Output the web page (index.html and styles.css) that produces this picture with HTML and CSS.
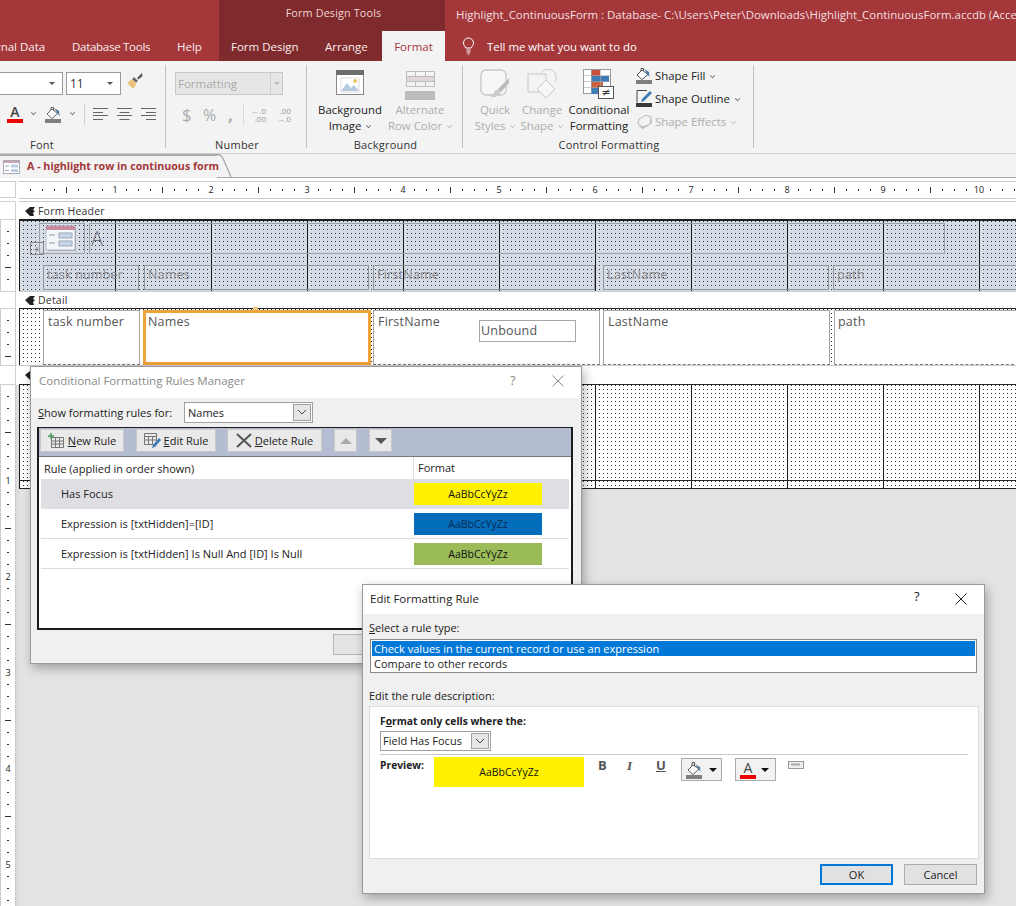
FILE: index.html
```html
<!DOCTYPE html>
<html lang="en">
<head>
<meta charset="utf-8">
<title>Highlight_ContinuousForm</title>
<link rel="stylesheet" href="styles.css">
</head>
<body>
<div class="app">
  <header class="titlebar">
    <div class="title-left"></div>
    <div class="context-title">Form Design Tools</div>
    <div class="doc-title">Highlight_ContinuousForm : Database- C:\Users\Peter\Downloads\Highlight_ContinuousForm.accdb (Access 2007 - 2016 file format) - Access</div>
  </header>
  <nav class="tabs">
    <div class="tabs-main">
      <span class="tab t-ext">External Data</span>
      <span class="tab t-db">Database Tools</span>
      <span class="tab t-help">Help</span>
    </div>
    <div class="tabs-context">
      <span class="tab t-fd">Form Design</span>
      <span class="tab t-arr">Arrange</span>
      <span class="tab t-fmt">Format</span>
    </div>
    <div class="tell">
      <svg class="bulb" width="13" height="18" viewBox="0 0 13 18"><path d="M6.500 1a5 5 0 0 0-5 5c0 2.200 1.500 3.200 2.200 5h5.600c.7-1.800 2.200-2.800 2.200-5a5 5 0 0 0-5-5z" fill="none" stroke="#fff"/><path d="M4.500 13h4M4.500 15h4M5.500 17h2" stroke="#fff"/></svg>
      <span>Tell me what you want to do</span>
    </div>
  </nav>

  <section class="ribbon">
    <div class="group g-font">
      <div class="group-body font-body">
        <div class="font-row1">
          <div class="combo c-name"><span class="arrow-s"></span></div>
          <div class="combo c-size"><span>11</span><span class="arrow-s"></span></div>
          <svg width="17" height="17" viewBox="0 0 17 17"><path d="M16 0l-5 5 1.500 1.500L16.500 3z" fill="#555"/><path d="M8 4l4 4-2 1.500-4-3z" fill="#666"/><path d="M6 6l4.500 4.500L7.500 16 1 10z" fill="#e8c17c"/></svg>
        </div>
        <div class="font-row2">
          <span class="color-a">A</span><span class="chev"></span>
          <svg class="fill-ic" width="18" height="17" viewBox="0 0 18 17"><path d="M7 3L2 8l5 4.500L12.500 7.500z" fill="#fff" stroke="#666"/><path d="M6 4V1.500h2.500V5" fill="none" stroke="#666"/><path d="M9 2l5 3 .5 5.500-2-3.500z" fill="#3f6f9f"/><rect x="0" y="13" width="16" height="4" fill="#7f7f7f"/></svg><span class="chev c2"></span>
          <span class="vsep"></span>
          <svg width="15" height="12" viewBox="0 0 15 12"><path d="M0 .5h15M0 4.500h10M0 7.500h15M0 11.500h10" stroke="#666"/></svg>
          <svg width="15" height="12" viewBox="0 0 15 12"><path d="M0 .5h15M2.500 4.500h10M0 7.500h15M2.500 11.500h10" stroke="#666"/></svg>
          <svg width="15" height="12" viewBox="0 0 15 12"><path d="M0 .5h15M5 4.500h10M0 7.500h15M5 11.500h10" stroke="#666"/></svg>
        </div>
      </div>
      <div class="group-label">Font</div>
    </div>

    <div class="group g-number">
      <div class="group-body num-body">
        <div class="combo c-fmt"><span>Formatting</span><span class="c-fmt-btn"></span></div>
        <div class="num-row">
          <span class="n-sym n-d">$</span><span class="n-sym n-p">%</span><span class="n-sym n-c">,</span>
          <span class="vsep v-light"></span>
          <span class="n-dec"><i>←.0</i><i>.00</i></span>
          <span class="n-dec"><i>.00</i><i>→.0</i></span>
        </div>
      </div>
      <div class="group-label">Number</div>
    </div>

    <div class="group g-bg">
      <div class="group-body bg-body">
        <div class="big b-img">
          <svg class="big-ic" width="28" height="25" viewBox="0 0 28 25"><rect x=".5" y=".5" width="27" height="24" fill="#fff" stroke="#888"/><rect width="28" height="5" fill="#6d6d6d"/><path d="M5 21l6-8 4 5 3-3 5 6z" fill="#b6cbe0"/><rect x="5" y="8" width="18" height="14" fill="none" stroke="#dcdcdc"/><circle cx="19" cy="11" r="2" fill="#e9c46a"/></svg>
          <span>Background</span><span>Image <i class="chev-in"></i></span>
        </div>
        <div class="big b-alt off">
          <svg class="big-ic" width="30" height="29" viewBox="0 0 30 29"><path d="M1.500.5h28v15h-28zM1.500 5.500h28M1.500 10.500h28M10.500.5v15M20.500.5v15" fill="none" stroke="#bdbdbd"/><rect x="2" y="6" width="27" height="4" fill="#dfd7db"/><rect y="20" width="32" height="9" fill="#bdbdbd"/></svg>
          <span>Alternate</span><span>Row Color <i class="chev-in"></i></span>
        </div>
      </div>
      <div class="group-label">Background</div>
    </div>

    <div class="group g-ctrl">
      <div class="group-body ctrl-body">
        <div class="big b-quick off">
          <svg class="big-ic" width="30" height="30" viewBox="0 0 30 30"><rect x="1" y="1" width="25" height="25" rx="5" fill="#f7f7f7" stroke="#c8c8c8" stroke-width="1.300"/><path d="M29 9L18 20l3 3 8-9z" fill="#bbb"/><path d="M18 20l-3 2-4 6c4 1 8-1 10-5z" fill="#ccc"/></svg>
          <span>Quick</span><span>Styles <i class="chev-in"></i></span>
        </div>
        <div class="big b-change off">
          <svg class="big-ic" width="30" height="30" viewBox="0 0 30 30"><rect x="1" y="5" width="18" height="18" fill="none" stroke="#c8c8c8"/><path d="M14 4a8 8 0 1 1 14 9" fill="none" stroke="#c8c8c8"/><path d="M19 11l9 9-9 9-9-9z" fill="#f7f7f7" stroke="#c8c8c8"/></svg>
          <span>Change</span><span>Shape <i class="chev-in"></i></span>
        </div>
        <div class="big b-cond">
          <svg class="big-ic" width="32" height="30" viewBox="0 0 32 30"><rect x=".5" y=".5" width="27" height="24" fill="#fff" stroke="#999"/><rect x="8" y="1" width="9" height="6" fill="#c9503f"/><rect x="8" y="7" width="18" height="6" fill="#3f7cb6"/><rect x="8" y="13" width="12" height="6" fill="#c9603f"/><rect x="8" y="19" width="7" height="6" fill="#3f7cb6"/><path d="M8.500 1v24M17.500 1v24M1 6.500h26M1 12.500h26M1 18.500h26" stroke="#aaa" fill="none" stroke-opacity=".6"/><rect x="15.500" y="17.500" width="15" height="12" fill="#fff" stroke="#555"/><text x="23" y="27" class="neq">≠</text></svg>
          <span>Conditional</span><span>Formatting</span>
        </div>
        <div class="shape-list">
          <div class="shape-item"><svg width="17" height="17" viewBox="0 0 17 17"><path d="M6 3L1 8l5 4.500 6-5z" fill="#fff" stroke="#555"/><path d="M5 4V1.500h2.500V4" fill="none" stroke="#555"/><path d="M8 2l5 3 .5 5-2-3z" fill="#3f6f9f"/><rect y="13" width="16" height="4" fill="#7f7f7f"/></svg><span>Shape Fill <i class="chev-in"></i></span></div>
          <div class="shape-item"><svg width="17" height="17" viewBox="0 0 17 17"><path d="M1 .5h10M1 .5v12" stroke="#444" fill="none"/><path d="M14 1l2 2-8 8-3 1 1-3z" fill="#3f7cb6"/><rect y="13" width="16" height="4" fill="#3a3a3a"/></svg><span>Shape Outline <i class="chev-in"></i></span></div>
          <div class="shape-item off"><svg width="17" height="17" viewBox="0 0 17 17"><path d="M3 6l7-4 5 2-1 7-7 3-5-3z" fill="#f2f2f2" stroke="#bbb"/><path d="M15 4l1 6-9 6-5-3 5 1 7-3z" fill="#bbb"/></svg><span>Shape Effects <i class="chev-in"></i></span></div>
        </div>
      </div>
      <div class="group-label">Control Formatting</div>
    </div>
  </section>

  <div class="doc-strip">
    <div class="doc-tab">
      <svg width="17" height="14" viewBox="0 0 17 14"><rect x=".5" y=".5" width="16" height="13" fill="#fff" stroke="#aab"/><rect x="1" y="1" width="15" height="2" fill="#c9a3ad"/><rect x="8" y="4.500" width="7" height="3" fill="#bcd0e2"/><rect x="8" y="9" width="7" height="3" fill="#bcd0e2"/><path d="M2 6h4M2 10.500h4" stroke="#8aa"/></svg>
      <span>A - highlight row in continuous form</span>
    </div>
    <svg class="tab-curve" width="16" height="24" viewBox="0 0 16 24"><path d="M0 .5C5 .5 6 4 8 9l6 14" fill="none" stroke="#a9a9a9" stroke-width="1.300"/></svg>
  </div>

  <div class="ruler-row">
    <div class="corner"></div>
    <div class="hruler">
      <div class="inch"><b>1</b></div><div class="inch"><b>2</b></div><div class="inch"><b>3</b></div><div class="inch"><b>4</b></div><div class="inch"><b>5</b></div><div class="inch"><b>6</b></div><div class="inch"><b>7</b></div><div class="inch"><b>8</b></div><div class="inch"><b>9</b></div><div class="inch"><b>10</b></div>
    </div>
  </div>

  <div class="design">
    <div class="row bar-row"><div class="vbox"></div><div class="bar"><svg class="bar-ic" width="10" height="9" viewBox="0 0 10 9"><path d="M0 4l5-4h5L8 3l2 1-2 2 1 3H5z" fill="#222"/></svg>Form Header</div></div>
    <div class="row r-head">
      <div class="vruler"></div>
      <div class="canvas canvas-head">
        <div class="ctl logo-box">
          <svg width="31" height="26" viewBox="0 0 31 26"><rect x="3" y="3" width="28" height="23" fill="#999"/><rect x="1" y="1" width="29" height="24" fill="#f4f6f9" stroke="#b4bcc8"/><rect x="1" y="1" width="29" height="4" fill="#c78a9e"/><rect x="14" y="8" width="13" height="5" fill="#c7d6e6" stroke="#98a9bd"/><rect x="14" y="16" width="13" height="5" fill="#c7d6e6" stroke="#98a9bd"/><path d="M4 10h6M4 18h6" stroke="#8a97a8"/></svg>
        </div>
        <div class="ctl title-box">A</div>
        <div class="ctl mover">+</div>
        <div class="ctl hlabel l1">task number</div>
        <div class="ctl hlabel l2">Names</div>
        <div class="ctl hlabel l3">FirstName</div>
        <div class="ctl hlabel l4">LastName</div>
        <div class="ctl hlabel l5">path</div>
      </div>
    </div>
    <div class="row bar-row bar-d"><div class="vbox"></div><div class="bar"><svg class="bar-ic" width="10" height="9" viewBox="0 0 10 9"><path d="M0 4l5-4h5L8 3l2 1-2 2 1 3H5z" fill="#222"/></svg>Detail</div></div>
    <div class="row r-detail">
      <div class="vruler"></div>
      <div class="canvas canvas-detail">
        <div class="ctl field f1">task number</div>
        <div class="ctl field f2">Names</div>
        <div class="ctl field f3">FirstName</div>
        <div class="ctl field f4">LastName</div>
        <div class="ctl field f5">path</div>
        <div class="ctl unbound">Unbound</div>
        <span class="ctl handle"></span>
      </div>
    </div>
    <div class="row bar-row bar-f"><div class="vbox"></div><div class="bar"><svg class="bar-ic" width="10" height="9" viewBox="0 0 10 9"><path d="M0 4l5-4h5L8 3l2 1-2 2 1 3H5z" fill="#222"/></svg>Form Footer</div></div>
    <div class="row r-foot">
      <div class="vruler long">
        <div class="vinch"><b>1</b></div><div class="vinch"><b>2</b></div><div class="vinch"><b>3</b></div><div class="vinch"><b>4</b></div><div class="vinch"><b>5</b></div>
      </div>
      <div class="foot-wrap">
        <div class="canvas canvas-foot"></div>
        <div class="canvas canvas-foot2"></div>
        <div class="empty"></div>
      </div>
    </div>
  </div>

  <div class="dialog d-manager">
    <div class="dlg-title dim"><span>Conditional Formatting Rules Manager</span><span class="q">?</span><svg class="x" width="12" height="12" viewBox="0 0 12 12"><path d="M.5.5l11 11M11.500.5l-11 11" stroke="#8a8a8a"/></svg></div>
    <div class="m-show">
      <span><u>S</u>how formatting rules for:</span>
      <div class="dcombo m-combo"><span>Names</span><span class="dbtn"><svg width="10" height="6" viewBox="0 0 10 6"><path d="M1 1l4 4 4-4" fill="none" stroke="#444"/></svg></span></div>
    </div>
    <div class="m-panel">
      <div class="m-tools">
        <div class="tbtn b-new"><svg width="17" height="16" viewBox="0 0 17 16"><path d="M3.500 4.500h12v10h-12zM3.500 8h12M3.500 11h12M7.500 4.500v10M11.500 4.500v10" fill="none" stroke="#777"/><path d="M3 0v6M0 3h6" stroke="#4e9a5b" stroke-width="1.500"/></svg><span><u>N</u>ew Rule</span></div>
        <div class="tbtn b-edit"><svg width="17" height="16" viewBox="0 0 17 16"><path d="M.5.5h12v11H.5zM.5 3.500h12M.5 7h12M4.500 3.500v8M8.500 3.500v8" fill="none" stroke="#777"/><path d="M15 5l2 2-6 7-3 1 1-3z" fill="#3f7cb6"/></svg><span><u>E</u>dit Rule</span></div>
        <div class="tbtn b-del"><svg width="16" height="15" viewBox="0 0 16 15"><path d="M1 1l14 13M15 1L1 14" stroke="#555" stroke-width="2"/></svg><span><u>D</u>elete Rule</span></div>
        <div class="tbtn b-up"><span class="tri up"></span></div>
        <div class="tbtn b-down"><span class="tri down"></span></div>
      </div>
      <div class="m-head"><span class="m-col1">Rule (applied in order shown)</span><span class="m-col2">Format</span></div>
      <div class="m-rule sel"><span>Has Focus</span><div class="swatch yellow">AaBbCcYyZz</div></div>
      <div class="m-rule"><span>Expression is [txtHidden]=[ID]</span><div class="swatch blue">AaBbCcYyZz</div></div>
      <div class="m-rule"><span>Expression is [txtHidden] Is Null And [ID] Is Null</span><div class="swatch green">AaBbCcYyZz</div></div>
    </div>
    <div class="m-foot"><div class="mbtn"></div></div>
  </div>

  <div class="dialog d-edit">
    <div class="dlg-title"><span>Edit Formatting Rule</span><span class="q">?</span><svg class="x" width="12" height="12" viewBox="0 0 12 12"><path d="M.5.5l11 11M11.500.5l-11 11" stroke="#222"/></svg></div>
    <div class="e-body">
      <div class="e-label"><u>S</u>elect a rule type:</div>
      <div class="e-list">
        <div class="e-opt on">Check values in the current record or use an expression</div>
        <div class="e-opt">Compare to other records</div>
      </div>
      <div class="e-label e-l2">Edit the rule description:</div>
      <div class="e-panel">
        <div class="e-strong">F<u>o</u>rmat only cells where the:</div>
        <div class="dcombo e-combo"><span>Field Has Focus</span><span class="dbtn"><svg width="10" height="6" viewBox="0 0 10 6"><path d="M1 1l4 4 4-4" fill="none" stroke="#444"/></svg></span></div>
        <div class="e-line"></div>
        <div class="e-preview">
          <span class="e-strong e-pv">Preview:</span>
          <div class="swatch yellow e-sw">AaBbCcYyZz</div>
          <div class="e-tools">
            <span class="fx fb">B</span><span class="fx fi">I</span><span class="fx fu">U</span>
            <div class="pick p1"><svg width="18" height="18" viewBox="0 0 18 18"><path d="M7 4L2 9l5 4.500L13 8z" fill="#fff" stroke="#555"/><path d="M6 5V1.500h2.500V5" fill="none" stroke="#555"/><path d="M9 3l5 3 .5 5-2-3z" fill="#4d7ea8"/><rect y="14" width="16" height="4" fill="#7f7f7f"/></svg><span class="tri down black"></span></div>
            <div class="pick p2"><span class="pick-a">A</span><span class="tri down black"></span></div>
            <svg class="caption-ic" width="16" height="8" viewBox="0 0 16 8"><rect x=".5" y=".5" width="15" height="7" fill="#eee" stroke="#999"/><path d="M3 3.500h9" stroke="#aaa" stroke-width="2"/></svg>
          </div>
        </div>
      </div>
      <div class="e-foot">
        <div class="dbutton ok">OK</div>
        <div class="dbutton">Cancel</div>
      </div>
    </div>
  </div>
</div>
</body>
</html>
```
FILE: styles.css
```css
* { box-sizing: border-box; }
html, body { margin: 0; padding: 0; }
body { font-family: "Open Sans", "Noto Sans", "Liberation Sans", sans-serif; background: #e3e3e3; }
i { font-style: normal; }
.app { position: relative; width: 1016px; height: 906px; overflow: hidden; background: #fff; display: flex; flex-direction: column; }

/* title bar */
.titlebar { height: 31px; background: #a4373a; display: flex; flex: none; color: #f5dfe0; font-size: 12px; }
.title-left { width: 219px; flex: none; }
.context-title { width: 226px; flex: none; background: #7f2a2c; text-align: center; padding: 5px 0 0 3px; font-size: 10.8px; letter-spacing: .15px; color: #f0d5d6; }
.doc-title { padding: 7px 0 0 11px; white-space: nowrap; font-size: 11.45px; overflow: hidden; }
.tabs { height: 30px; background: #a4373a; display: flex; flex: none; color: #fff; font-size: 11.5px; }
.tabs-main { width: 219px; flex: none; display: flex; overflow: hidden; position: relative; }
.tabs-context { width: 226px; flex: none; display: flex; background: #7f2a2c; }
.tab { display: block; line-height: 31px; white-space: nowrap; color: #fbeeee; }
.t-ext { flex: none; margin-left: -27px; width: 99px; }
.t-db { flex: none; width: 105px; letter-spacing: -.28px; }
.t-help { flex: none; }
.t-fd { margin-left: 12px; width: 94px; }
.t-arr { width: 57px; }
.t-fmt { width: 63px; background: #f3f3f3; color: #a4373a; text-align: center; }
.tell { display: flex; align-items: center; margin-left: 17px; color: #fff; font-size: 11.4px; }
.tell span { margin-left: 12px; }

/* ribbon */
.ribbon { height: 93px; flex: none; background: #f3f3f3; border-bottom: 1px solid #d0d0d0; display: flex; font-size: 11.4px; color: #222; }
.group { flex: none; display: flex; flex-direction: column; padding-top: 4px; border-right: 1px solid transparent; position: relative; }
.group::after { content: ""; position: absolute; right: 0; top: 4px; height: 83px; width: 1px; background: #c2c2c2; }
.group-body { height: 72px; flex: none; }
.group-label { text-align: center; font-size: 11px; line-height: 16px; color: #333; letter-spacing: .2px; }
.g-font { width: 167px; }
.g-font .group-label { padding-right: 82px; }
.g-number { width: 141px; }
.g-bg { width: 156px; }
.g-ctrl { width: 291px; }
.font-body { overflow: hidden; }
.font-row1 { display: flex; align-items: center; margin-top: 7px; margin-left: -20px; }
.combo { height: 23px; background: #fff; border: 1px solid #9a9a9a; display: flex; align-items: center; position: relative; font-size: 12px; }
.c-name { width: 83px; }
.c-size { width: 55px; margin-left: 3px; padding-left: 3px; color: #333; }
.font-row1 svg { margin-left: 5px; margin-top: -4px; }
.arrow-s { position: absolute; right: 7px; top: 9px; border: 3px solid transparent; border-top-color: #555; }
.font-row2 { display: flex; align-items: center; margin-top: 9px; margin-left: 7px; height: 20px; }
.color-a { width: 16px; text-align: center; font-size: 14px; line-height: 14px; height: 18px; color: #444; border-bottom: 4px solid #e00; font-weight: 600; }
.chev, .chev-in { display: inline-block; width: 5px; height: 5px; border-right: 1px solid #666; border-bottom: 1px solid #666; transform: rotate(45deg) scale(.75); }
.chev { margin: -3px 0 0 8px; }
.chev-in { margin: 0 0 2px 2px; }
.fill-ic { margin-left: 9px; }
.chev.c2 { margin-left: 7px; }
.vsep { width: 1px; height: 21px; background: #cfcfcf; margin: 0 8px 0 9px; }
.font-row2 svg + svg { margin-left: 9px; }
.font-row2 .vsep + svg { margin-left: 0; }
.num-body { padding-left: 8px; }
.c-fmt { width: 108px; background: #e6e6e6; border-color: #c8c8c8; color: #aaa; margin-top: 7px; padding-left: 2px; font-size: 11.5px; }
.c-fmt-btn { position: absolute; right: 0; top: 0; bottom: 0; width: 12px; border-left: 1px solid #d0d0d0; }
.c-fmt-btn::after { content: ""; position: absolute; left: 3px; top: 9px; border: 3px solid transparent; border-top-color: #bbb; }
.num-row { display: flex; align-items: center; margin-top: 9px; height: 21px; color: #aaa; }
.n-sym { font-size: 17px; line-height: 20px; }
.n-d { margin-left: 7px; width: 21px; }
.n-p { width: 25px; font-size: 16px; }
.n-c { width: 15px; font-weight: 700; }
.n-dec { display: flex; flex-direction: column; font-size: 8px; line-height: 8px; text-align: right; width: 15px; color: #999; white-space: nowrap; }
.num-row .vsep { margin: 0 7px 0 0; background: #d8d8d8; }
.n-dec + .n-dec { margin-left: 10px; }
.bg-body { display: flex; }
.big { display: flex; flex-direction: column; align-items: center; font-size: 11.4px; line-height: 16px; white-space: nowrap; }
.big-ic { margin-bottom: 9px; flex: none; }
.off { color: #adadad; }
.off .chev-in { border-color: #bbb; }
.b-img { width: 70px; margin-left: 7px; padding-top: 5px; }
.b-img .big-ic { margin-bottom: 7px; }
.b-alt { width: 70px; padding-top: 6px; }
.b-alt .big-ic { margin-bottom: 2px; }
.ctrl-body { display: flex; }
.b-quick { width: 48px; margin-left: 7px; padding-top: 4px; }
.b-quick .big-ic, .b-change .big-ic { margin-bottom: 3px; }
.b-change { width: 46px; padding-top: 4px; }
.b-cond { width: 68px; padding-top: 4px; }
.b-cond .big-ic { margin-bottom: 3px; }
.neq { font-size: 11px; text-anchor: middle; fill: #333; font-family: "DejaVu Sans", sans-serif; }
.shape-list { margin-left: 3px; margin-top: -1px; display: flex; flex-direction: column; }
.shape-item { display: flex; align-items: center; height: 23px; white-space: nowrap; }
.shape-item span { margin-left: 2px; }

/* doc tab strip */
.doc-strip { height: 24px; flex: none; background: #f3f3f3; display: flex; border-bottom: 1px solid #aaa; position: relative; }
.doc-tab { width: 217px; height: 24px; flex: none; border-top: 2px solid #a9a9a9; background: #f3f3f3; display: flex; align-items: center; padding: 0 0 2px 3px; }
.doc-tab svg { margin-top: 2px; flex: none; }
.doc-tab span { flex: none; margin-left: 7px; color: #a4373a; font-weight: 700; font-size: 10.7px; white-space: nowrap; }
.tab-curve { flex: none; position: relative; }

/* ruler */
.ruler-row { height: 24px; flex: none; display: flex; padding: 3px 0; background: #fff; }
.corner { width: 16px; height: 17px; margin-right: 3px; border: 1px solid #cfcfcf; border-left: 0; flex: none; }
.hruler { flex: 1; display: flex; height: 18px; border-top: 1px solid #ccc; border-bottom: 1px solid #ccc; align-items: center;
  background-image: repeating-linear-gradient(90deg, transparent 0 11px, #333 11px 12px), repeating-linear-gradient(90deg, transparent 0 47px, #333 47px 48px);
  background-size: 100% 2px, 100% 6px; background-repeat: no-repeat; background-position: 0 center, 0 center; }
.inch { width: 96px; flex: none; display: flex; justify-content: flex-end; font-size: 9px; color: #222; line-height: 12px; }
.inch b { font-weight: 400; background: #fff; transform: translateX(50%); padding: 0 1px; }

/* design surface */
.design { flex: 1; display: flex; flex-direction: column; min-height: 0; margin-top: -1px; }
.row { display: flex; flex: none; }
.bar-row { height: 19px; }
.vbox { width: 16px; height: 100%; margin-right: 3px; flex: none; border: 1px solid #d0d0d0; border-left: 0; }
.bar { flex: 1; height: 100%; background: #fff; border-top: 1px solid #ccc; border-bottom: 1px solid #222; font-size: 10.5px; color: #333; display: flex; align-items: center; padding: 1px 0 0 6px; letter-spacing: .2px; }
.bar-ic { margin-right: 3px; }
.r-head { height: 71px; }
.vruler { width: 16px; margin-right: 3px; flex: none; border-right: 1px solid #ccc; border-left: 1px solid #ccc;
  background-image: repeating-linear-gradient(180deg, transparent 0 11px, #333 11px 12px), repeating-linear-gradient(180deg, transparent 0 47px, #333 47px 48px);
  background-size: 2px 100%, 6px 100%; background-repeat: no-repeat; background-position: 6px 0, 4px 0; }
.canvas { flex: 1; position: relative;
  background-image: linear-gradient(90deg, transparent 95px, #1a1a1a 95px), conic-gradient(from 270deg at 1px 1px, #333 90deg, transparent 0);
  background-size: 96px 100%, 4px 4px; background-position: 1px 0, 0 0; }
.canvas-head { background-color: #d6dce6; border-top: 1px solid #222; }
.bar-d { height: 18px; }
.bar-d .bar { padding-top: 0; }
.r-detail { height: 56px; }
.canvas-detail { background-color: #fff; }
.bar-f { height: 20px; }
.r-foot { flex: 1; min-height: 0; background: #dcdcdc; }
.foot-wrap { flex: 1; display: flex; flex-direction: column; }
.canvas-foot { flex: none; height: 96px; background-color: #fff; border-bottom: 1px solid #222; }
.canvas-foot2 { flex: none; height: 8px; background-color: #fff; border-bottom: 1px solid #222; }
.empty { flex: 1; background: #e3e3e3; }
.vruler.long { display: flex; flex-direction: column; overflow: hidden; background-color: #fff; }
.vinch { height: 96px; flex: none; display: flex; justify-content: center; align-items: flex-end; font-size: 9px; line-height: 12px; color: #222; }
.vinch b { font-weight: 400; background: #fff; transform: translateY(50%); }

/* controls on the form canvas */
.ctl { position: absolute; }
.logo-box { left: 20px; top: 2px; width: 46px; height: 31px; border: 1px solid #9aa0aa; padding: 1px 0 0 5px; display: flex; }
.title-box { left: 70px; top: 2px; width: 856px; height: 31px; border: 1px solid #9aa0aa; font-size: 20px; font-weight: 300; line-height: 29px; color: #6a6f78; padding-left: 1px; }
.mover { left: 11px; top: 21px; width: 14px; height: 13px; border: 1px solid #8a8a8a; font-size: 11px; line-height: 11px; text-align: center; color: #666; }
.hlabel { top: 44px; height: 25px; border: 1px solid #8f949c; font-size: 12.5px; line-height: 18px; color: #85898f; padding-left: 3px; white-space: nowrap; letter-spacing: .2px; }
.l1 { left: 24px; width: 96px; }
.l2 { left: 125px; width: 225px; }
.l3 { left: 354px; width: 222px; }
.l4 { left: 584px; width: 226px; }
.l5 { left: 814px; width: 185px; border-right: 0; }
.field { top: 1px; height: 55px; background: #fff; border: 1px solid #a6a6a6; border-bottom: 1px dashed #777; font-size: 12.5px; line-height: 21px; color: #555; padding-left: 4px; letter-spacing: .2px; }
.f1 { left: 24px; width: 97px; }
.f2 { left: 124px; width: 228px; border: 3px solid #f0a43a; padding-left: 2px; line-height: 17px; }
.f3 { left: 354px; width: 227px; }
.f4 { left: 584px; width: 227px; }
.f5 { left: 815px; width: 190px; border-right: 0; padding-left: 3px; }
.unbound { left: 460px; top: 11px; width: 97px; height: 22px; background: #fff; border: 1px solid #a6a6a6; font-size: 12.5px; line-height: 20px; color: #555; padding-left: 1px; letter-spacing: .2px; }
.handle { left: 234px; top: -2px; width: 5px; height: 3px; background: #f2c27c; }

/* dialogs */
.dialog { position: absolute; background: #f0f0f0; border: 1px solid #9a9a9a; box-shadow: 2px 4px 10px rgba(0,0,0,.3); color: #222; font-size: 11px; display: flex; flex-direction: column; }
.dlg-title { height: 29px; flex: none; background: #fff; display: flex; align-items: center; padding: 0 0 2px 7px; font-size: 11.5px; position: relative; }
.dlg-title.dim { color: #8a8a8a; height: 31px; padding: 0 0 4px 8px; }
.q { position: absolute; font-size: 13px; }
.x { position: absolute; }
.d-manager { left: 30px; top: 366px; width: 552px; height: 298px; }
.d-manager .q { left: 479px; top: 4px; }
.d-manager .x { left: 521px; top: 8px; }
.m-show { display: flex; align-items: center; padding: 3px 0 0 7px; height: 25px; }
.m-show > span { width: 146px; }
.dcombo { background: #fff; border: 1px solid #a0a0a0; display: flex; align-items: center; padding-left: 3px; position: relative; }
.m-combo { width: 129px; height: 21px; }
.dbtn { position: absolute; right: 0; top: 0; width: 18px; bottom: 0; background: #e6e6e6; border: 1px solid #a0a0a0; margin: 1px; display: flex; align-items: center; justify-content: center; }
.m-panel { margin: 4px 0 0 6px; width: 536px; height: 203px; border: 2px solid #1c1c1c; border-top-width: 1px; background: #fff; display: flex; flex-direction: column; padding: 0 2px 0 0; }
.m-tools { height: 29px; flex: none; background: #b3bcd0; display: flex; align-items: flex-start; padding: 1px 0 0 1px; margin-right: -2px; border-bottom: 1px solid #777; }
.tbtn { height: 23px; background: #e9e9e9; border: 1px solid #c8c8c8; display: flex; align-items: center; justify-content: center; font-size: 11px; }
.tbtn span { margin-left: 3px; }
.b-new { width: 84px; }
.b-edit { width: 80px; margin-left: 12px; }
.b-del { width: 95px; margin-left: 11px; }
.b-up { width: 23px; margin-left: 12px; }
.b-down { width: 23px; margin-left: 12px; }
.tri { width: 0; height: 0; border: 6px solid transparent; }
.tri.up { border-bottom: 6px solid #a8a8a8; border-top: 0; margin: 0 !important; }
.tri.down { border-top: 6px solid #555; border-bottom: 0; margin: 0 !important; }
.tri.black { border-width: 4px 4px 0; border-top-color: #111; }
.m-head { height: 22px; flex: none; display: flex; align-items: center; }
.m-col1 { width: 374px; padding-left: 5px; }
.m-col2 { height: 100%; border-left: 1px solid #ddd; padding: 3px 0 0 4px; }
.m-rule { height: 30px; flex: none; display: flex; align-items: center; justify-content: space-between; padding: 0 27px 0 20px; border-bottom: 1px solid #ddd; margin-left: 2px; }
.m-rule .swatch { width: 128px; height: 22px; }
.m-rule.sel { background: #dfdfe3; border-bottom: 0; }
.m-rule.sel > span { margin-top: -2px; }
.swatch { display: flex; align-items: center; justify-content: center; font-size: 10.5px; color: #111; }
.yellow { background: #fff200; }
.blue { background: #016dbb; color: #0a2a55; }
.green { background: #9bbb59; }
.m-foot { flex: 1; position: relative; }
.mbtn { position: absolute; left: 302px; top: 4px; width: 72px; height: 21px; background: #e4e4e4; border: 1px solid #b5b5b5; }
.d-edit { left: 362px; top: 584px; width: 623px; height: 310px; }
.d-edit .q { left: 551px; top: 2px; }
.d-edit .x { left: 592px; top: 8px; }
.e-body { flex: 1; display: flex; flex-direction: column; padding: 0 7px 0 6px; }
.e-label { height: 25px; line-height: 14px; padding: 7px 0 0 0; flex: none; }
.e-list { margin-left: 1px; width: 607px; height: 34px; background: #fff; border: 1px solid #888; padding: 1px; flex: none; }
.e-opt { height: 15px; line-height: 16px; padding-left: 2px; }
.e-opt.on { background: #0078d7; color: #fff; }
.e-l2 { margin-top: 16px; height: 17px; padding-top: 0; }
.e-panel { height: 153px; flex: none; width: 610px; background: #fff; border: 1px solid #dcdcdc; padding: 7px 10px 0 10px; display: flex; flex-direction: column; }
.e-strong { font-weight: 700; font-size: 10.3px; line-height: 14px; }
.e-combo { margin-top: 3px; width: 111px; height: 20px; flex: none; padding: 0 0 1px 2px; }
.e-line { height: 1px; background: #c8c8c8; margin-top: 3px; flex: none; }
.e-preview { display: flex; margin-top: 2px; }
.e-pv { width: 54px; padding-top: 1px; }
.e-sw { width: 150px; height: 30px; }
.e-tools { display: flex; align-items: flex-start; margin-left: 13px; }
.fx { font-size: 13px; font-weight: 700; color: #555; width: 29px; line-height: 17px; padding-left: 1px; }
.fi { font-style: italic; font-family: "Liberation Serif", serif; font-size: 13px; }
.fu { text-decoration: underline; width: 21px; margin-right: 5px; }
.pick { width: 41px; height: 23px; background: #f2f2f2; border: 1px solid #aaa; display: flex; align-items: center; padding-left: 4px; gap: 5px; margin-top: 1px; }
.p2 { margin-left: 13px; }
.pick-a { font-size: 14px; line-height: 14px; width: 16px; text-align: center; height: 18px; color: #444; border-bottom: 4px solid #e00; }
.caption-ic { margin: 4px 0 0 12px; }
.e-foot { flex: 1; display: flex; justify-content: flex-end; padding-top: 5px; gap: 11px; }
.dbutton { width: 73px; height: 21px; background: #e1e1e1; border: 1px solid #adadad; display: flex; align-items: center; justify-content: center; }
.dbutton.ok { border: 2px solid #0078d7; }
```
